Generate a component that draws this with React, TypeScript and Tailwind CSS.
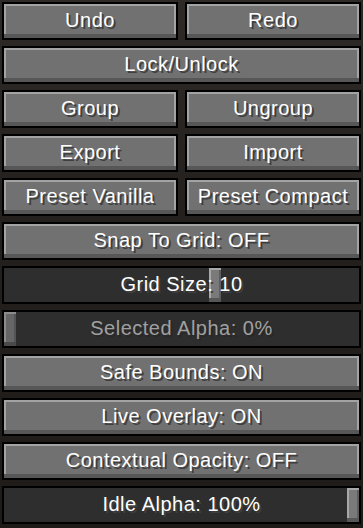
import React from "react";

const font =
  "font-['Liberation_Sans',Arial,sans-serif] text-[20px] leading-none tracking-[0.5px]";
const white = "text-white [text-shadow:2px_2px_0_#3f3f3f]";
const grey = "text-[#a0a0a0] [text-shadow:2px_2px_0_#282828]";

function Btn({ label }: { label: string }) {
  return (
    <div className="flex h-[38px] items-center justify-center border-2 border-black bg-[#717171] pb-[3px] shadow-[inset_0_-4px_0_#575757,inset_2px_2px_0_#a3a3a3,inset_-2px_0_0_#a3a3a3]">
      <span className={`${font} ${white} whitespace-nowrap`}>{label}</span>
    </div>
  );
}

function Slider({
  label,
  pos,
  disabled,
}: {
  label: string;
  pos: "left" | "right" | "grid";
  disabled?: boolean;
}) {
  const handlePos =
    pos === "left" ? "left-0" : pos === "right" ? "right-0" : "left-[205px]";
  return (
    <div className="relative flex h-[38px] items-center justify-center border-2 border-black bg-[#2e2e2e] pb-[3px]">
      <div
        className={`absolute top-0 bottom-0 w-[12px] ${handlePos} ${
          disabled
            ? "bg-[#666666] shadow-[inset_0_-4px_0_#4a4a4a,inset_2px_2px_0_#8c8c8c,inset_-2px_0_0_#555555]"
            : "bg-[#7a7a7a] shadow-[inset_0_-4px_0_#575757,inset_2px_2px_0_#a8a8a8,inset_-2px_0_0_#5e5e5e]"
        }`}
      />
      <span
        className={`relative ${font} ${disabled ? grey : white} whitespace-nowrap`}
      >
        {label}
      </span>
    </div>
  );
}

export default function App() {
  return (
    <div className="flex h-[528px] w-[363px] flex-col gap-[6px] overflow-hidden bg-[linear-gradient(180deg,#2d2a27_0%,#24201d_40%,#1f1b18_100%)] px-[2px] pt-[2px]">
      <div className="grid grid-cols-2 gap-[7px]">
        <Btn label="Undo" />
        <Btn label="Redo" />
      </div>
      <Btn label="Lock/Unlock" />
      <div className="grid grid-cols-2 gap-[7px]">
        <Btn label="Group" />
        <Btn label="Ungroup" />
      </div>
      <div className="grid grid-cols-2 gap-[7px]">
        <Btn label="Export" />
        <Btn label="Import" />
      </div>
      <div className="grid grid-cols-2 gap-[7px]">
        <Btn label="Preset Vanilla" />
        <Btn label="Preset Compact" />
      </div>
      <Btn label="Snap To Grid: OFF" />
      <Slider label="Grid Size: 10" pos="grid" />
      <Slider label="Selected Alpha: 0%" pos="left" disabled />
      <Btn label="Safe Bounds: ON" />
      <Btn label="Live Overlay: ON" />
      <Btn label="Contextual Opacity: OFF" />
      <Slider label="Idle Alpha: 100%" pos="right" />
    </div>
  );
}
